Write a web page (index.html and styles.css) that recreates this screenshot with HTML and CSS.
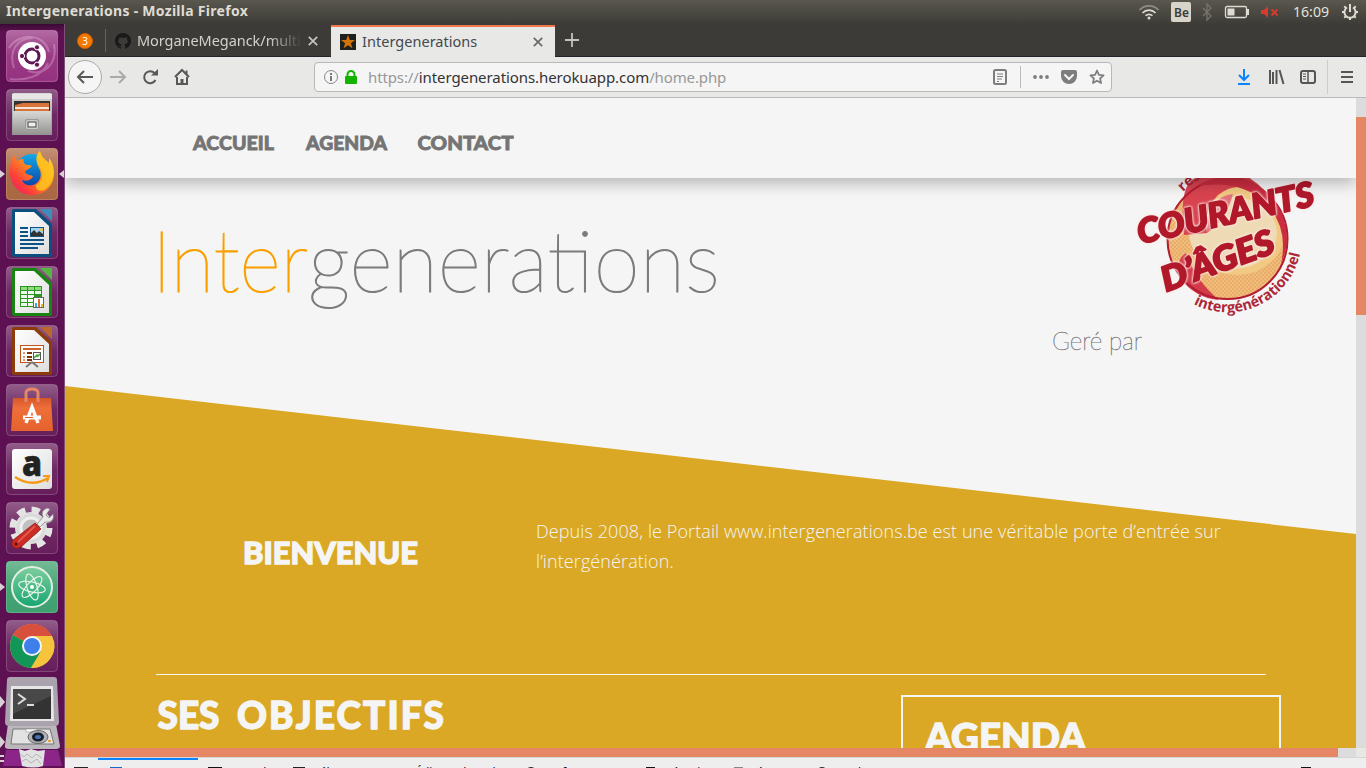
FILE: index.html
```html
<!DOCTYPE html>
<html lang="fr">
<head>
<meta charset="utf-8">
<title>Intergenerations</title>
<link rel="stylesheet" href="styles.css">
</head>
<body>
<svg class="defs" width="0" height="0" aria-hidden="true">
  <defs>
    <linearGradient id="gloss" x1="0" y1="0" x2="0" y2="1"><stop offset="0" stop-color="#fff" stop-opacity=".32"/><stop offset=".5" stop-color="#fff" stop-opacity=".1"/><stop offset="1" stop-color="#fff" stop-opacity=".06"/></linearGradient>
    <linearGradient id="metal" x1="0" y1="0" x2="0" y2="1"><stop offset="0" stop-color="#d8d8d6"/><stop offset="1" stop-color="#929290"/></linearGradient>
    <linearGradient id="paper" x1="0" y1="0" x2="1" y2="1"><stop offset="0" stop-color="#fff"/><stop offset="1" stop-color="#dedede"/></linearGradient>
    <linearGradient id="fox" x1="1" y1="0" x2="0" y2="1"><stop offset="0" stop-color="#ffe93a"/><stop offset=".4" stop-color="#ff9a1c"/><stop offset=".75" stop-color="#ff3b3b"/><stop offset="1" stop-color="#d9187c"/></linearGradient>
    <linearGradient id="globe" x1="0" y1="0" x2="0" y2="1"><stop offset="0" stop-color="#12a8e6"/><stop offset="1" stop-color="#0b3fa8"/></linearGradient>
    <linearGradient id="atomg" x1="0" y1="0" x2="0" y2="1"><stop offset="0" stop-color="#7fce9d"/><stop offset="1" stop-color="#16a673"/></linearGradient>
    <linearGradient id="bag" x1="0" y1="0" x2="0" y2="1"><stop offset="0" stop-color="#d4572a"/><stop offset=".3" stop-color="#ee6f3a"/><stop offset="1" stop-color="#e5622c"/></linearGradient>
    <g id="tile"><rect x=".5" y=".5" width="51" height="51" rx="4" fill="url(#gloss)" stroke="#fff" stroke-opacity=".2"/></g>
  </defs>
</svg>

<header class="panel">
  <span class="panel-title">Intergenerations - Mozilla Firefox</span>
  <svg class="indicators" width="232" height="24" viewBox="1134 0 232 24">
    <g fill="none" stroke-width="1.7"><path d="M1139.500 10a13 13 0 0 1 19 0" stroke="#8e8b84"/><path d="M1142.500 13a9 9 0 0 1 13 0M1145.500 15.700a5.500 5.500 0 0 1 7 0" stroke="#dfdbd2"/></g><circle cx="1149" cy="18" r="1.500" fill="#dfdbd2"/>
    <rect x="1171" y="2" width="20" height="20" rx="2" fill="#d8d4ca"/><text class="lang" x="1174" y="17">Be</text>
    <path d="M1203 8l8 8-4 4V4l4 4-8 8" fill="none" stroke="#77746d" stroke-width="1.300"/>
    <rect x="1225.500" y="6.500" width="21" height="11" rx="1.500" fill="none" stroke="#dfdbd2" stroke-width="1.300"/><path d="M1227.500 8.500h7v7h-7zM1247 9h2v6h-2z" fill="#dfdbd2"/>
    <path d="M1261 10h3l4-4v12l-4-4h-3z" fill="#d93a2b"/><path d="M1271.500 9.500l6 6m0-6l-6 6" stroke="#d93a2b" stroke-width="2"/>
    <text class="clock" x="1293" y="17" textLength="36" lengthAdjust="spacingAndGlyphs">16:09</text>
    <g fill="none" stroke="#dfdbd2"><path d="M1347 7.500a5.600 5.600 0 1 0 6 0" stroke-width="2"/><path d="M1350 4v8" stroke-width="2"/><path d="M1342 12h2.500m11 0h2.500m-8 5.500v2.500m-5.700-13.700l1.800 1.800m7.800 7.800l1.800 1.800m0-11.400l-1.800 1.800m-7.800 7.800l-1.800 1.800" stroke-width="2"/></g>
  </svg>
</header>

<div class="desktop">
  <aside class="launcher">
    <svg class="app" viewBox="0 0 52 52"><rect width="52" height="52" rx="4" fill="#8f2578"/><g fill="none" stroke="#d9a0cc" stroke-opacity=".4" stroke-width="2"><path d="M3 18C12 3 38 2 43 22M8 38C2 20 12 8 27 8M48 14c4 22-12 32-26 27M4 49c14 2 32-2 38-16"/></g><use href="#tile"/><circle cx="26" cy="26" r="14" fill="#fff"/><circle cx="26" cy="26" r="7" fill="none" stroke="#5f1753" stroke-width="3"/><g fill="#5f1753" stroke="#fff"><circle cx="16" cy="26" r="2.600"/><circle cx="31" cy="17.300" r="2.600"/><circle cx="31" cy="34.700" r="2.600"/></g></svg>
    <svg class="app" viewBox="0 0 52 52"><use href="#tile"/><path d="M6 6q0-2 2-2h36q2 0 2 2v40H6z" fill="url(#metal)"/><path d="M6 5h40v5H6z" fill="#e6e6e4"/><path d="M8 12h36v10H8z" fill="#333"/><path d="M9 16l8-2h26v8H9z" fill="#d8743a"/><path d="M9 18h34v2H9z" fill="#f6e5d8"/><path d="M7 22h38v24H7z" fill="url(#metal)"/><rect x="19" y="30" width="14" height="11" rx="2" fill="#999"/><rect x="20" y="31" width="12" height="9" rx="1.500" fill="#ccc"/><rect x="22" y="33" width="8" height="5" fill="#eee" stroke="#444"/></svg>
    <svg class="app" viewBox="0 0 52 52"><rect width="52" height="52" rx="4" fill="#a55d36"/><use href="#tile"/><circle cx="26" cy="23" r="17" fill="url(#globe)"/><path d="M34 3c-5 5-4 12-1 17 4 7 1 15-6 17-6 1-10-1-11-5 5 2 8 0 11-3-1-3-6-1-8-5 0-2 5-3 7-6-3-2-6 0-8-3l-1-4c-3 0-5 1-6 3l-3-7C5 11 4 18 4 25c1 13 10 22 22 22 13 0 22-9 22-22 0-7-2-11-5-15v5c-4-4-8-6-9-12z" fill="url(#fox)"/><path d="M34 3c-5 4-4 10 0 16 5 8 2 15-4 18-1 4 3 7 8 5 8-5 10-13 9-20-1-5-2-7-4-9v4c-4-3-7-6-9-14z" fill="#ffc21f" fill-opacity=".85"/></svg>
    <svg class="app" viewBox="0 0 52 52"><use href="#tile"/><path d="M6 4q0-2 2-2h22l16 15v31q0 2-2 2H8q-2 0-2-2z" fill="#0b4f80"/><path d="M9 5h19l15 14v28H9z" fill="url(#paper)"/><path d="M34 2h12v12z" fill="#3d8dbb"/><g fill="#0d5486"><path d="M14 20h8v2h-8zm0 4h8v2h-8zm0 4h8v2h-8zm0 4h24v2H14zm0 4h24v2H14zm0 4h18v2H14z"/><path d="M24 20h14v10H24z"/></g><path d="M25 21h12v8H25z" fill="#a5d3ef"/><path d="M25 29v-3l3-3 3 3 2-2 4 3v2z" fill="#333"/><circle cx="35.500" cy="22.500" r="1.500" fill="#f4c335"/></svg>
    <svg class="app" viewBox="0 0 52 52"><use href="#tile"/><path d="M6 4q0-2 2-2h22l16 15v31q0 2-2 2H8q-2 0-2-2z" fill="#1a8412"/><path d="M9 5h19l15 14v28H9z" fill="url(#paper)"/><path d="M34 2h12v12z" fill="#55b743"/><path d="M14 20h22v21H14z" fill="#299720"/><path d="M15 21h6v3h-6zm7 0h6v3h-6zm7 0h6v3h-6z" fill="#8fdb7d"/><path d="M15 25h6v3h-6zm7 0h6v3h-6zm7 0h6v3h-6zM15 29h6v3h-6zm7 0h6v3h-6zM15 33h6v3h-6zm7 0h5v3h-5zM15 37h6v3h-6zm7 0h5v3h-5z" fill="#effbed"/><rect x="27.500" y="31.500" width="10" height="10" fill="#fff" stroke="#666"/><path d="M29 37h2v4h-2z" fill="#36a5e0"/><path d="M32 33h2v8h-2z" fill="#e06a26"/><path d="M35 38h2v3h-2z" fill="#efbb22"/></svg>
    <svg class="app" viewBox="0 0 52 52"><use href="#tile"/><path d="M6 4q0-2 2-2h22l16 15v31q0 2-2 2H8q-2 0-2-2z" fill="#8d3b0b"/><path d="M9 5h19l15 14v28H9z" fill="url(#paper)"/><path d="M34 2h12v12z" fill="#bb672e"/><rect x="14.500" y="20.500" width="23" height="17" fill="#fff" stroke="#c3521b"/><path d="M17 23h18v2H17z" fill="#d2622a"/><path d="M17 27h2v2h-2zm0 4h2v2h-2zm0 3h2v2h-2z" fill="#e49367"/><path d="M21 27h5v2h-5zm0 4h5v2h-5zm0 3h5v2h-5z" fill="#7d310a"/><rect x="27.500" y="27.500" width="7" height="7" fill="#fff" stroke="#555"/><path d="M28 33l3-3 1 1 2-2" fill="none" stroke="#43a137" stroke-width="1.500"/><path d="M26 37l-6 5m6-5l6 5" stroke="#777" stroke-width="2"/></svg>
    <svg class="app" viewBox="0 0 52 52"><use href="#tile"/><path d="M7 14h38l2 33H5z" fill="url(#bag)"/><path d="M20 18V9q0-4 6-4t6 4v9" fill="none" stroke="#e58664" stroke-width="3"/><path d="M20 39l6-16 6 16" fill="none" stroke="#fff" stroke-width="3.400"/><path d="M17 31.500h18v4H17z" fill="#fff"/><path d="M19 33h8v1h-8z" fill="#e5622c"/></svg>
    <svg class="app" viewBox="0 0 52 52"><use href="#tile"/><rect x="6" y="6" width="40" height="40" rx="3" fill="url(#paper)"/><text class="amazon" x="16" y="33" textLength="20" lengthAdjust="spacingAndGlyphs">a</text><path d="M9 34q17 11 33 1" fill="none" stroke="#f79a18" stroke-width="2.500"/><path d="M37 33h6l-2 6" fill="none" stroke="#f79a18" stroke-width="2"/></svg>
    <svg class="app" viewBox="0 0 52 52"><use href="#tile"/><circle cx="25" cy="26" r="16" fill="#dadada"/><circle cx="25" cy="26" r="18" fill="none" stroke="#e4e4e4" stroke-width="7" stroke-dasharray="8 6.140"/><circle cx="25" cy="26" r="10" fill="#c0c0c0" stroke="#efefef" stroke-width="3"/><path d="M31 22l6-7q-3-6 4-9l3 1-4 6 3 3 4-4q2 7-5 8h-3l-5 5z" fill="#e9e9e9" stroke="#888" stroke-width=".8"/><path d="M29 21l6 6-20 18q-5 3-8 0t0-7z" fill="#ca2c24" stroke="#84140f" stroke-width=".7"/><path d="M29 24L12 40" stroke="#e4574d" stroke-width="2"/><circle cx="10" cy="42" r="1.500" fill="#54100d"/></svg>
    <svg class="app" viewBox="0 0 52 52"><rect width="52" height="52" rx="4" fill="#339a66"/><use href="#tile"/><circle cx="26" cy="26" r="20" fill="url(#atomg)" stroke="#e3efe3" stroke-width="2"/><g fill="none" stroke="#e8f4e8" stroke-width="1.200"><ellipse cx="26" cy="26" rx="13.500" ry="5" transform="rotate(13 26 26)"/><ellipse cx="26" cy="26" rx="13.500" ry="5" transform="rotate(73 26 26)"/><ellipse cx="26" cy="26" rx="13.500" ry="5" transform="rotate(133 26 26)"/></g><circle cx="26" cy="26" r="2" fill="#fff"/></svg>
    <svg class="app" viewBox="0 0 52 52"><use href="#tile"/><circle cx="26" cy="26" r="22" fill="#f5c43c"/><path d="M26 26L7 15A22 22 0 0 1 46 16H26z" fill="#d8503d"/><path d="M7 15a22 22 0 0 0 18 33l10-16-9-6z" fill="#129657"/><path d="M26 16h20a22 22 0 0 1-21 32l10-17z" fill="#f5c43c"/><circle cx="26" cy="26" r="10" fill="#f4f4f4"/><circle cx="26" cy="26" r="8" fill="#3f7fec"/></svg>
    <svg class="stack" viewBox="0 677 65 91"><path d="M6 750h52l4 16H3z" fill="#8b2587"/><path d="M19 749l6 2 6-2 7 2 7-1-2 16q-9 3-21 0z" fill="#e2e2e2"/><path d="M20 754l4 3 3-3 5 4 4-4 6 4m-21 4l5-3 5 4 6-4 4 5" fill="none" stroke="#b5b5b5"/><path d="M8 724h48l4 22q0 3-4 3H9q-5 0-4-4z" fill="#bcb6bd"/><path d="M13 729h37l4 15H11z" fill="#e2e2e2" stroke="#777"/><path d="M26 729h11v3H26z" fill="#fff" stroke="#999" stroke-width=".6"/><ellipse cx="38" cy="737" rx="10" ry="6.500" fill="#aeb2b7" stroke="#666"/><ellipse cx="38" cy="737" rx="6" ry="4.500" fill="#181e29"/><ellipse cx="38" cy="737" rx="3" ry="2" fill="#4774ae"/><path d="M48 740h3v2h-3z" fill="#e7a23b"/><path d="M10 677h44q3 0 3 3l2 42q0 4-4 4H9q-4 0-4-4l2-42q0-3 3-3z" fill="#aaa3ad"/><path d="M11 686h42l1 35H10z" fill="#e6e6e6"/><path d="M13 689h38v30H13z" fill="#333"/><path d="M13 689h38v7L13 714z" fill="#484848"/><path d="M18 694l7 5-7 5M27 705h7" fill="none" stroke="#ddd" stroke-width="2"/><path d="M0 696l5 6-5 6zM0 736l5 6-5 6zM0 755h4v2H0zm0 5h4v2H0z" fill="#d9d0d6"/></svg>
    <i class="pip pip-fox"></i><i class="pip pip-focus"></i><i class="pip pip-atom"></i>
  </aside>

  <main class="browser">
    <div class="tabs">
      <div class="tab-pinned"><span class="count">3</span></div>
      <div class="tab tab-idle">
        <svg width="16" height="16" viewBox="0 0 16 16"><circle cx="8" cy="8" r="8" fill="#191919"/><path d="M4.300 4l2 .8h3.400l2-.8.2 2c2 3 .2 5-2.200 5.300.5.700.4 1.700.4 4.700H6v-2c-2 .3-2.500-1-3.300-1.600 1 0 1.500 1 3.400.7l.3-1.700C3.800 11 2.300 9 4 6z" fill="#3c3b37"/></svg>
        <span class="tab-label faded">MorganeMeganck/multi</span>
        <svg class="close" width="10" height="10" viewBox="0 0 10 10"><path d="M.8.800l8.400 8.400m0-8.400L.8 9.200" stroke="#c8c5bf" stroke-width="1.700"/></svg>
      </div>
      <div class="tab tab-active">
        <svg width="16" height="16" viewBox="0 0 16 16"><path d="M0 0h16v16H0z" fill="#20201f"/><path d="M8 1l1.800 4.900 5.200.1-4.100 3.200 1.500 5L8 11.300l-4.400 2.900 1.500-5L1 6l5.200-.1z" fill="#d07308"/></svg>
        <span class="tab-label">Intergenerations</span>
        <svg class="close" width="10" height="10" viewBox="0 0 10 10"><path d="M.8.800l8.400 8.400m0-8.400L.8 9.200" stroke="#6a6a6a" stroke-width="1.700"/></svg>
      </div>
      <svg class="plus" width="14" height="14" viewBox="0 0 14 14"><path d="M7 0v14M0 7h14" stroke="#c7c4be" stroke-width="1.800"/></svg>
    </div>

    <div class="toolbar">
      <svg width="135" height="40" viewBox="65 57 135 40"><circle cx="85" cy="77" r="16.500" fill="#f5f5f5" stroke="#aaa"/><g fill="none" stroke="#585858" stroke-width="2"><path d="M93 77H78m6-6l-6 6 6 6"/><path d="M110 77h15m-6-6l6 6-6 6" stroke="#aaa"/><path d="M155.500 80a6 6 0 1 1-1-7"/><path d="M175 77l7-7 7 7M177 77v7h10v-7"/></g><path d="M151 75.500h7V69zM180.500 79h3v4h-3zM185.500 70.500h2v4h-2z" fill="#585858"/></svg>
      <div class="urlbar">
        <svg width="44" height="28" viewBox="315 63 44 28"><circle cx="331" cy="77" r="6.500" fill="none" stroke="#878787"/><path d="M330 76h2v5h-2zm0-3h2v2h-2z" fill="#787878"/><path d="M347.500 77v-2.500a3.500 3.500 0 0 1 7 0V77" fill="none" stroke="#12b400" stroke-width="2"/><rect x="345" y="76" width="12" height="8" rx="1" fill="#12b400"/></svg>
        <span class="url">https://<b>intergenerations.herokuapp.com</b>/home.php</span>
        <svg class="url-actions" width="125" height="28" viewBox="986 63 125 28"><g fill="none" stroke="#7d7d7d" stroke-width="2"><rect x="994" y="70" width="12" height="14" rx="1.500"/><path d="M997 74h6m-6 2.500h6m-6 2.500h5m-5 2.500h2" stroke-width="1"/><path d="M1097 70.500l1.900 4.300 4.700.5-3.500 3.200 1 4.600-4.100-2.400-4.100 2.400 1-4.600-3.500-3.200 4.700-.5z" stroke-width="1.700" stroke-linejoin="round"/></g><path d="M1020.500 66v22" stroke="#bbb"/><g fill="#7d7d7d"><circle cx="1035" cy="77" r="1.900"/><circle cx="1041" cy="77" r="1.900"/><circle cx="1047" cy="77" r="1.900"/><path d="M1063 70h12q2 0 2 2v4a8 8 0 0 1-16 0v-4q0-2 2-2z"/></g><path d="M1065 75l4 4 4-4" fill="none" stroke="#f5f5f5" stroke-width="2" stroke-linecap="round"/></svg>
      </div>
      <svg class="tools" width="136" height="40" viewBox="1230 57 136 40"><path d="M1244 69v11m-5-5l5 5 5-5M1238 84h12" fill="none" stroke="#0a84ff" stroke-width="2"/><g fill="none" stroke="#565656" stroke-width="2"><path d="M1270 70v14m3-12v12m3.500-14v14m3-14l4 14"/><rect x="1301" y="71" width="14" height="12" rx="2"/><path d="M1308 71v12" stroke-width="1.500"/><path d="M1303 74h3m-3 2.500h3m-3 2.500h3" stroke-width="1"/><path d="M1341 72h12m-12 5h12m-12 5h12"/></g><path d="M1327.500 60v34" stroke="#cdcdcd"/></svg>
    </div>

    <div class="viewport">
      <div class="page">
        <nav class="site-nav">
          <svg width="340" height="30" viewBox="192 128 340 30" class="heavy grey"><text x="193" y="150" textLength="81" lengthAdjust="spacingAndGlyphs">ACCUEIL</text><text x="306" y="150" textLength="81" lengthAdjust="spacingAndGlyphs">AGENDA</text><text x="417.500" y="150" textLength="96" lengthAdjust="spacingAndGlyphs">CONTACT</text></svg>
        </nav>
        <section class="hero">
          <h1 class="brand"><svg width="570" height="110" viewBox="155 215 570 110"><text class="brand-a" x="152" y="292" textLength="156" lengthAdjust="spacingAndGlyphs">Inter</text><text class="brand-b" x="308" y="292" textLength="412" lengthAdjust="spacingAndGlyphs">generations</text></svg></h1>
          <div class="sponsor">
            <svg class="badge" width="220" height="150" viewBox="1120 178 220 150">
              <defs><path id="arcLow" d="M1193.500 304A74 74 0 0 0 1301.500 242"/><path id="arcTop" d="M1183 192A69 69 0 0 1 1240 171"/><pattern id="dots" width="4" height="4" patternUnits="userSpaceOnUse"><circle cx="1" cy="1" r=".7" fill="#dc8d57"/><circle cx="3" cy="3" r=".7" fill="#dc8d57"/></pattern></defs>
              <circle cx="1227.500" cy="239" r="60" fill="#efbd78"/><circle cx="1227.500" cy="239" r="60" fill="url(#dots)"/>
              <ellipse cx="1237" cy="231" rx="48" ry="44" fill="#f2c983"/><ellipse cx="1233" cy="233" rx="44" ry="36" fill="#eedbb5"/>
              <path d="M1184 235q-5-45 8-55 40-25 74 12-30-12-48 3-15 15-11 38z" fill="#d8434f"/><path d="M1207 230q2-34 26-36-7 26-26 39z" fill="#e3747d"/>
              <path d="M1186 253q-11 7-6 25 15 20 39 22-23-19-33-47z" fill="#d33a48"/>
              <circle cx="1227.500" cy="239" r="60" fill="none" stroke="#b31c31" stroke-width="2"/><path d="M1196 186q46-24 77 13 23 32 8 65 8-36-15-61-25-24-70-17z" fill="#ca2c40"/>
              <g class="brush"><text transform="translate(1140 244) rotate(-12.500)" textLength="180" lengthAdjust="spacingAndGlyphs">COURANTS</text><text transform="translate(1166 292) rotate(-20)" textLength="118" lengthAdjust="spacingAndGlyphs">D’ÂGES</text></g>
              <g class="arc"><text><textPath href="#arcLow" textLength="136" lengthAdjust="spacingAndGlyphs">intergénérationnel</textPath></text><text><textPath href="#arcTop">réseau</textPath></text></g>
            </svg>
            <svg class="managed" width="100" height="36" viewBox="1050 326 100 36"><text x="1052" y="350" textLength="90" lengthAdjust="spacingAndGlyphs">Geré par</text></svg>
          </div>
        </section>
        <section class="gold">
          <div class="welcome">
            <h2 class="heavy"><svg width="180" height="34" viewBox="241 536 180 34"><text class="t-welcome" x="243" y="564" textLength="175" lengthAdjust="spacingAndGlyphs">BIENVENUE</text></svg></h2>
            <p>Depuis 2008, le Portail www.intergenerations.be est une véritable porte d’entrée sur l’intergénération.</p>
          </div>
          <hr>
          <div class="columns">
            <h2 class="heavy"><svg width="292" height="44" viewBox="156 695 292 44"><text class="t-large" y="729"><tspan x="157.500" textLength="62" lengthAdjust="spacingAndGlyphs">SES</tspan> <tspan x="237" textLength="207" lengthAdjust="spacing">OBJECTIFS</tspan></text></svg></h2>
            <div class="agenda heavy"><svg width="166" height="40" viewBox="923 715 166 40"><text class="t-large" x="925" y="751" textLength="161" lengthAdjust="spacingAndGlyphs">AGENDA</text></svg></div>
          </div>
        </section>
      </div>
      <div class="vscroll"><div class="vthumb"></div></div>
    </div>
    <div class="hscroll"><div class="hthumb"></div></div>
    <div class="devtools">
      <div class="dt dt-pick"><i class="glyph wide"></i></div>
      <div class="dt dt-insp"><i class="glyph blue"></i>Inspecteur</div>
      <div class="dt w84"><i class="glyph box"></i>Console</div>
      <div class="dt w104"><i class="glyph"></i>Débogueur</div>
      <div class="dt w127"><span class="braces">{ }</span>Éditeur de style</div>
      <div class="dt w121"><i class="glyph round"></i>Performances</div>
      <div class="dt w88"><i class="glyph box small"></i>Mémoire</div>
      <div class="dt w82"><i class="glyph soft"></i>Réseau</div>
      <div class="dt"><i class="glyph round"></i>Stockage</div>
      <i class="glyph box small dock"></i>
    </div>
  </main>
</div>
</body>
</html>
```
FILE: styles.css
```css
* { box-sizing: border-box; }
body { margin: 0; width: 1366px; height: 768px; overflow: hidden; display: flex; flex-direction: column; font-family: "Noto Sans", "Open Sans", sans-serif; background: #f5f5f5; }
svg { display: block; flex: none; }
.defs { position: absolute; }
h1, h2, p { margin: 0; font-weight: inherit; }

.panel { height: 24px; flex: none; display: flex; justify-content: space-between; align-items: center; padding-left: 6px; background: linear-gradient(#59574e, #3d3c37); color: #dfdbd2; }
.panel-title { font-size: 14px; line-height: 20px; margin-top: -2px; font-weight: 700; letter-spacing: .28px; white-space: nowrap; }
.indicators { font-family: "Noto Sans", sans-serif; }
.lang { font-size: 12px; fill: #3c3b37; font-weight: 600; }
.clock { font-size: 14.5px; fill: #e5e1d8; }

.desktop { flex: 1; display: flex; min-height: 0; }
.launcher { position: relative; width: 65px; flex: none; padding: 6px 0 0; display: flex; flex-direction: column; gap: 7px; overflow: hidden; background: linear-gradient(#390a32, #5e1152 8px, #5e1152); border-right: 1px solid #805078; }
.app { width: 52px; height: 52px; margin-left: 6px; }
.stack { width: 65px; height: 91px; margin-top: -2px; }
.amazon { font: 800 36px "Open Sans", sans-serif; fill: #222; stroke: #222; stroke-width: .6px; }
.pip { position: absolute; width: 0; height: 0; border: solid transparent; border-width: 4px 0 4px 5px; border-left-color: #d9d0d6; }
.pip-fox { left: 0; top: 146px; }
.pip-focus { right: 0; top: 146px; border-width: 4px 5px 4px 0; border-right-color: #d9d0d6; }
.pip-atom { left: 0; top: 559px; }

.browser { flex: 1; min-width: 0; display: flex; flex-direction: column; }
.tabs { height: 33px; flex: none; display: flex; align-items: stretch; background: #3c3b37; border-bottom: 1px solid #242329; }
.tab-pinned { width: 41px; display: flex; align-items: center; justify-content: center; border-right: 1px solid #66645f; margin: 5px 0 4px; }
.count { width: 16px; height: 16px; border-radius: 50%; background: #f57900; border: 1px solid #d25d00; color: #fff; font-size: 10px; line-height: 14px; text-align: center; }
.tab { display: flex; align-items: center; gap: 6px; padding: 1px 12px 0 9px; font-size: 14.5px; }
.tab-idle { width: 225px; padding-right: 13px; color: #d3d0ca; }
.tab-label { flex: 1; white-space: nowrap; overflow: hidden; letter-spacing: .03px; line-height: 20px; padding-bottom: 1px; }
.tab-idle .tab-label { letter-spacing: -.05px; }
.faded { -webkit-mask-image: linear-gradient(90deg, #000 80%, transparent); mask-image: linear-gradient(90deg, #000 80%, transparent); }
.tab-active { width: 224px; margin: 1px 0 -1px; padding-top: 0; padding-bottom: 1px; background: #e8e8e7; border-top: 2px solid #f0764c; color: #45484c; }
.plus { margin: 9px 0 0 10px; }

.toolbar { height: 41px; flex: none; display: flex; align-items: flex-start; background: #e8e8e7; border-bottom: 1px solid #b9b9b9; }
.urlbar { width: 798px; height: 30px; margin: 5px 0 0 114px; display: flex; align-items: center; background: #f5f5f5; border: 1px solid #b8b8b8; border-radius: 4px; }
.url { margin-left: 9px; font-size: 15px; letter-spacing: -.12px; color: #989898; white-space: nowrap; }
.url b { font-weight: 400; color: #333; letter-spacing: -.08px; }
.url-actions { margin-left: auto; }
.tools { margin-left: auto; }

.viewport { height: 650px; flex: none; display: flex; }
.page { width: 1291px; height: 650px; overflow: hidden; display: flex; flex-direction: column; }
.site-nav { position: relative; z-index: 1; height: 80px; flex: none; padding: 30px 0 0 127px; background: #f5f5f5; box-shadow: 0 5px 15px rgba(0, 0, 0, .27); }
.heavy { font-family: Lato, sans-serif; font-weight: 900; fill: #f5f5f5; stroke: #f5f5f5; stroke-width: 1.3px; }
.grey { font-size: 19px; fill: #747474; stroke: #747474; stroke-width: .8px; }
.hero { height: 208px; flex: none; display: flex; justify-content: space-between; padding: 0 16px 0 90px; }
.brand { padding-top: 37px; }
.brand svg { font-family: Lato, sans-serif; font-weight: 100; font-size: 86px; overflow: visible; }
.brand-a { fill: #f9a000; stroke: #f9a000; stroke-width: 1.2px; }
.brand-b { fill: #7c7c7c; stroke: #7c7c7c; stroke-width: 1.1px; }
.sponsor { width: 290px; display: flex; flex-direction: column; }
.badge { align-self: flex-end; }
.managed { margin-top: -2px; font: 100 25px Lato, sans-serif; fill: #777; stroke: #777; stroke-width: .45px; }
.brush { font: italic 900 34px Lato, sans-serif; fill: #b1192b; stroke: #b1192b; stroke-width: 2px; stroke-linejoin: round; filter: drop-shadow(0 0 1px #fbe9e4) drop-shadow(0 0 1px #fbe9e4); }
.arc { font: 700 14.5px "Open Sans", sans-serif; fill: #ad2637; }
.gold { height: 362px; flex: none; background: #daa824; clip-path: polygon(0 0, 100% 148px, 100% 100%, 0 100%); padding: 130px 90px 0 91px; }
.welcome { display: flex; height: 158px; }
.welcome h2 { width: 380px; padding: 20px 0 0 85px; }
.welcome p { width: 710px; font: 300 18px/30px "Open Sans", sans-serif; letter-spacing: .09px; color: #f5f5f5; }
.t-welcome { font-size: 29.5px; }
.t-large { font-size: 37px; }
hr { height: 1px; margin: 0; border: 0; background: #f5f5f5; }
.columns { display: flex; justify-content: space-between; padding-top: 20px; }
.agenda { width: 380px; height: 120px; margin-right: -15px; border: 2px solid #f5f5f5; padding: 18px 0 0 20px; }

.vscroll { width: 10px; padding-top: 19px; background: #dcdcdc; }
.vthumb { height: 198px; background: #e58764; }
.hscroll { height: 9px; flex: none; background: linear-gradient(90deg, #dcdcdc 1291px, #e7e7e4 1291px); }
.hthumb { width: 1273px; height: 9px; background: #e58764; }
.devtools { height: 11px; flex: none; display: flex; overflow: hidden; background: #eee; border-top: 1px solid #d5d5d5; font-size: 12px; line-height: 16px; color: #111; }
.dt { flex: none; display: flex; gap: 6px; padding-top: 7px; height: 30px; white-space: nowrap; }
.dt-pick { width: 33px; padding-left: 9px; }
.dt-insp { width: 110px; padding-left: 12px; background: linear-gradient(#0a84ff, #0a84ff) 0 0 / 100px 2px no-repeat; }
.w84 { width: 85px; }
.w104 { width: 105px; }
.w127 { width: 127px; }
.w121 { width: 121px; }
.w88 { width: 88px; }
.w82 { width: 82px; }
.glyph { width: 12px; height: 12px; margin-top: 2px; background: #222; flex: none; }
.wide { width: 14px; }
.blue { background: #1768c9; }
.box { background: none; border: 1px solid #111; width: 14px; }
.round { background: none; border: 1px solid #222; border-radius: 50%; }
.small { width: 9px; }
.soft { background: #888; width: 9px; }
.braces { font-size: 11px; }
.dock { margin: 9px 55px 0 auto; width: 10px; }
```
